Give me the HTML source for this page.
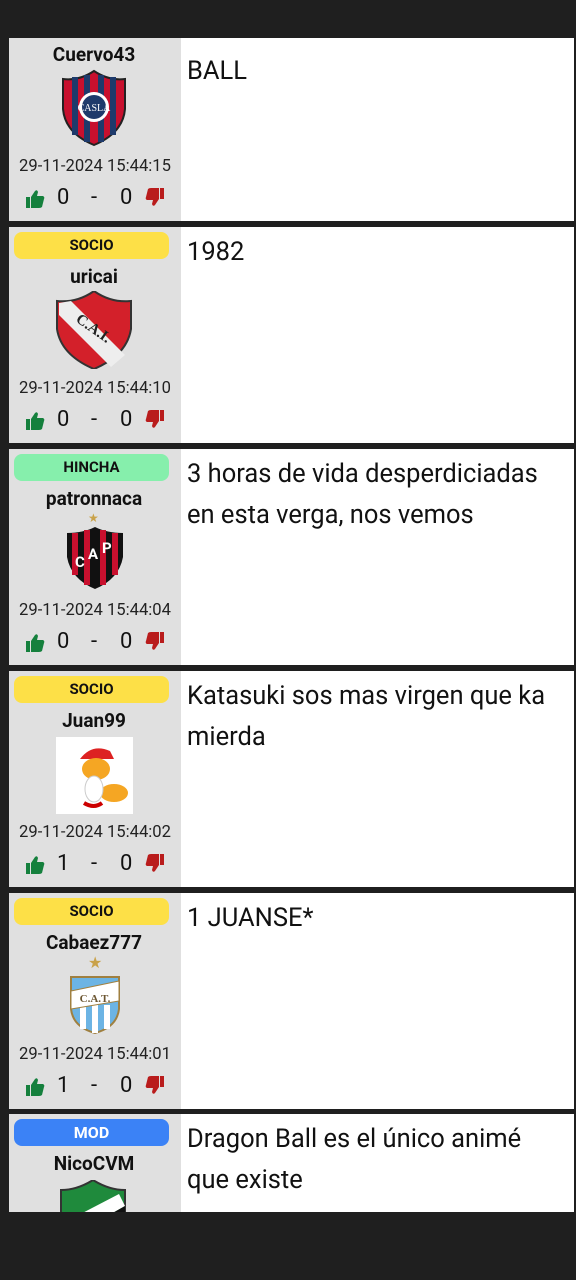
<!DOCTYPE html>
<html><head><meta charset="utf-8"><style>
*{margin:0;padding:0;box-sizing:border-box}
body{width:576px;height:1280px;background:#1f1f1f;position:relative;overflow:hidden;font-family:"Roboto","Liberation Sans",sans-serif}
#vp{position:absolute;left:0;top:38px;width:576px;height:1174px;overflow:hidden;background:#1f1f1f}
.card{position:absolute;left:9px;width:565px;height:216px;background:#fff}
.side{position:absolute;left:0;top:0;width:172px;height:216px;background:#e0e0e0}
.badge{position:absolute;left:5px;top:5px;width:155px;height:27px;border-radius:8px;font-weight:bold;font-size:15px;line-height:27px;text-align:center;color:#111}
.socio{background:#fde047}.hincha{background:#86efac}.mod{background:#3b82f6;color:#fff;font-size:16px}
.name{position:absolute;left:0;width:170px;top:38px;text-align:center;font-weight:bold;font-size:19px;color:#111;line-height:24px}
.logo{position:absolute;left:46px;top:64px;width:78px;height:78px}
.date{position:absolute;left:0;width:172px;top:150px;text-align:center;font-size:16.6px;color:#222;line-height:24px}
.votes{position:absolute;left:0;top:179px;width:172px;height:28px;font-size:22px;color:#111;line-height:28px}
.votes span,.votes svg{position:absolute}
.txt{position:absolute;left:178px;top:5px;width:372px;font-size:25.5px;line-height:41px;color:#111}
.star{position:absolute;left:79px;top:50px;color:#c9a24a;font-size:14px}
</style></head><body>
<svg width="0" height="0" style="position:absolute"><defs>
<symbol id="tu" viewBox="0 0 20 20"><rect x="1" y="8" width="4" height="11" fill="currentColor"/><path d="M6 8 L10 2 Q12 0 13 3 L12 7 H18 Q20 8 19 10 L17 18 Q16 19 14 19 H6Z" fill="currentColor"/></symbol>
</defs></svg>
<div id="vp">
<div class="card" style="top:-33px">
 <div class="side">
  <div class="badge" style="background:#e88"></div>
  <div class="name">Cuervo43</div>
  <svg class="logo" viewBox="0 0 78 78"><path d="M8 10 Q24 12 39 2 Q54 12 70 10 L70 40 Q68 64 39 76 Q10 64 8 40Z" fill="#c8102e" stroke="#222" stroke-width="2"/><path d="M20 8V66M32 6V73M46 6V73M58 8V66" stroke="#1e3a6b" stroke-width="6"/><circle cx="39" cy="38" r="15" fill="#fff"/><circle cx="39" cy="38" r="12" fill="#1e3a6b"/><text x="39" y="42" font-size="10" fill="#fff" text-anchor="middle" font-family="Liberation Serif">CASLA</text></svg>
  <div class="date">29-11-2024 15:44:15</div>
  <div class="votes"><svg style="left:16px;top:5px;color:#15803d" width="20" height="20"><use href="#tu"/></svg><span style="left:48px">0</span><span style="left:82px">-</span><span style="left:111px">0</span><svg style="left:136px;top:3px;color:#b91c1c;transform:rotate(180deg)" width="20" height="20"><use href="#tu"/></svg></div>
 </div>
 <div class="txt">&nbsp;<br>BALL</div>
</div>

<div class="card" style="top:189px">
 <div class="side">
  <div class="badge socio">SOCIO</div>
  <div class="name">uricai</div>
  <svg class="logo" viewBox="0 0 78 78"><path d="M2 10 Q22 12 39 0 Q56 12 76 10 L76 38 Q72 64 39 78 Q6 64 2 38Z" fill="#d3202a" stroke="#333" stroke-width="2"/><path d="M4 12 L4 24 L56 76 L70 64 L16 10Z" fill="#eee"/><text x="20" y="30" font-size="15" fill="#222" font-family="Liberation Serif" font-weight="bold" transform="rotate(35 20 30)">C.A.I.</text></svg>
  <div class="date">29-11-2024 15:44:10</div>
  <div class="votes"><svg style="left:16px;top:5px;color:#15803d" width="20" height="20"><use href="#tu"/></svg><span style="left:48px">0</span><span style="left:82px">-</span><span style="left:111px">0</span><svg style="left:136px;top:3px;color:#b91c1c;transform:rotate(180deg)" width="20" height="20"><use href="#tu"/></svg></div>
 </div>
 <div class="txt">1982</div>
</div>

<div class="card" style="top:411px">
 <div class="side">
  <div class="badge hincha">HINCHA</div>
  <div class="name">patronnaca</div>
  <div class="star" style="top:62px;font-size:12px">★</div>
  <svg class="logo" style="left:56px;top:78px;width:60px;height:62px" viewBox="0 0 60 62"><path d="M2 6 Q18 6 30 0 Q42 6 58 6 L58 30 Q54 52 30 62 Q6 52 2 30Z" fill="#111"/><path d="M10 6V48M22 3V58M38 3V58M50 6V48" stroke="#c8102e" stroke-width="6"/><text x="10" y="40" font-size="15" fill="#fff" font-weight="bold">C</text><text x="23" y="32" font-size="15" fill="#fff" font-weight="bold">A</text><text x="37" y="26" font-size="15" fill="#fff" font-weight="bold">P</text></svg>
  <div class="date">29-11-2024 15:44:04</div>
  <div class="votes"><svg style="left:16px;top:5px;color:#15803d" width="20" height="20"><use href="#tu"/></svg><span style="left:48px">0</span><span style="left:82px">-</span><span style="left:111px">0</span><svg style="left:136px;top:3px;color:#b91c1c;transform:rotate(180deg)" width="20" height="20"><use href="#tu"/></svg></div>
 </div>
 <div class="txt">3 horas de vida desperdiciadas en esta verga, nos vemos</div>
</div>

<div class="card" style="top:633px">
 <div class="side">
  <div class="badge socio">SOCIO</div>
  <div class="name">Juan99</div>
  <svg class="logo" style="left:47px;top:66px;width:77px;height:77px" viewBox="0 0 77 77"><rect width="77" height="77" fill="#fff"/><path d="M24 22 Q36 6 54 14 L58 22Z" fill="#d22"/><ellipse cx="40" cy="32" rx="14" ry="11" fill="#f5a623"/><ellipse cx="58" cy="56" rx="14" ry="9" fill="#f5a623"/><ellipse cx="38" cy="52" rx="9" ry="13" fill="#fff" stroke="#ccc"/><path d="M28 66 Q38 72 46 66" stroke="#c00" stroke-width="4" fill="none"/></svg>
  <div class="date">29-11-2024 15:44:02</div>
  <div class="votes"><svg style="left:16px;top:5px;color:#15803d" width="20" height="20"><use href="#tu"/></svg><span style="left:48px">1</span><span style="left:82px">-</span><span style="left:111px">0</span><svg style="left:136px;top:3px;color:#b91c1c;transform:rotate(180deg)" width="20" height="20"><use href="#tu"/></svg></div>
 </div>
 <div class="txt">Katasuki sos mas virgen que ka mierda</div>
</div>

<div class="card" style="top:855px">
 <div class="side">
  <div class="badge socio">SOCIO</div>
  <div class="name">Cabaez777</div>
  <div class="star" style="top:60px;font-size:16px">★</div>
  <svg class="logo" style="left:60px;top:82px;width:52px;height:60px" viewBox="0 0 52 60"><path d="M2 2 H50 V34 Q48 52 26 58 Q4 52 2 34Z" fill="#6cb4e4" stroke="#a08040" stroke-width="2"/><path d="M14 30V54M26 30V58M38 30V54" stroke="#fff" stroke-width="6"/><path d="M2 16 L50 6 L50 26 L2 34Z" fill="#fff" stroke="#a08040"/><text x="26" y="27" font-size="11" text-anchor="middle" fill="#6b5530" font-family="Liberation Serif" font-weight="bold">C.A.T.</text></svg>
  <div class="date">29-11-2024 15:44:01</div>
  <div class="votes"><svg style="left:16px;top:5px;color:#15803d" width="20" height="20"><use href="#tu"/></svg><span style="left:48px">1</span><span style="left:82px">-</span><span style="left:111px">0</span><svg style="left:136px;top:3px;color:#b91c1c;transform:rotate(180deg)" width="20" height="20"><use href="#tu"/></svg></div>
 </div>
 <div class="txt">1 JUANSE*</div>
</div>

<div class="card" style="top:1076px">
 <div class="side">
  <div class="badge mod">MOD</div>
  <div class="name">NicoCVM</div>
  <svg class="logo" style="left:50px;top:66px;width:68px;height:70px" viewBox="0 0 68 70"><path d="M2 10 Q18 10 34 0 Q50 10 66 10 L66 40 Q62 60 34 70 Q6 60 2 40Z" fill="#1f8a3c" stroke="#333" stroke-width="2"/><path d="M10 40 L60 14 L66 26 L20 52Z" fill="#fff"/><path d="M20 52 L66 26 L66 40 Q62 60 34 70Z" fill="#111"/></svg>
 </div>
 <div class="txt">Dragon Ball es el único animé que existe</div>
</div>
</div>
</body></html>
